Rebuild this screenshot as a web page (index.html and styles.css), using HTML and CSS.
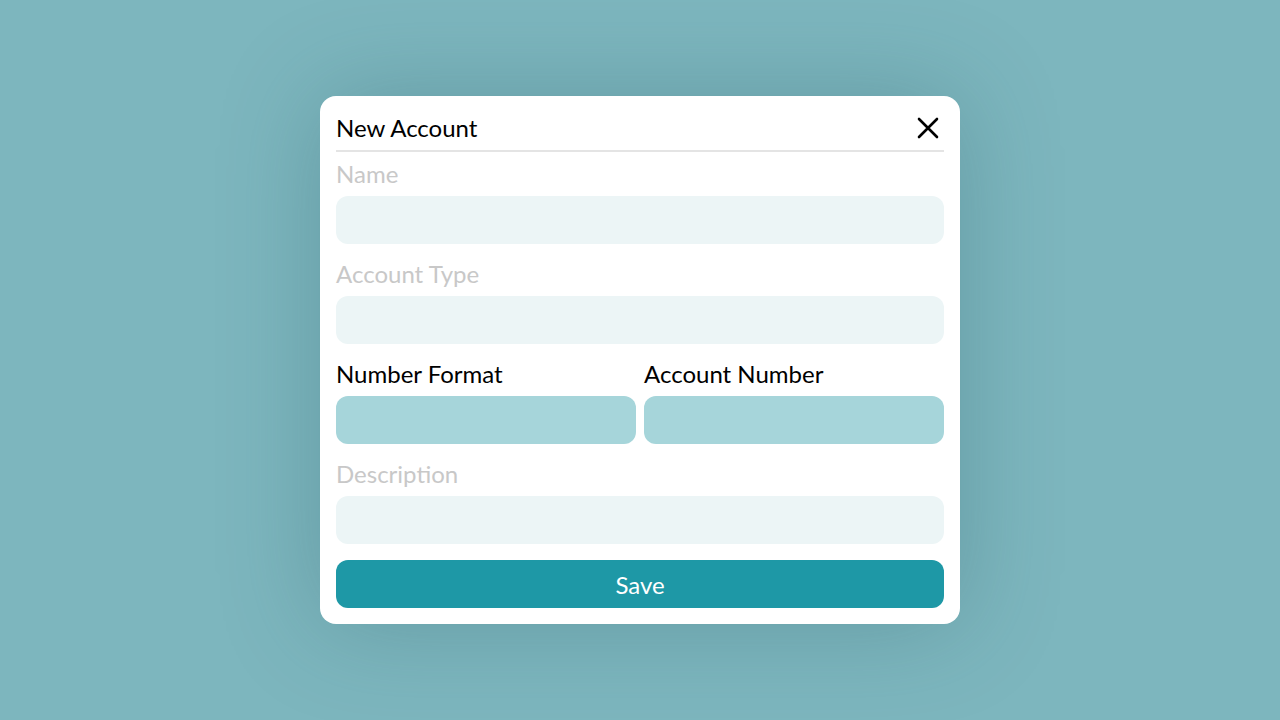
FILE: index.html
```html
<!DOCTYPE html>
<html lang="en">
<head>
    <meta charset="UTF-8">
    <title>New Account</title>
    <link rel="stylesheet" href="styles.css">
</head>
<body>
    <div class="modal">
        <div class="modal-header">
            <h2>New Account</h2>
            <button class="close-btn" aria-label="Close">
                <svg width="22" height="22" viewBox="0 0 22 22">
                    <path d="M2 2 L20 20 M20 2 L2 20" stroke="#000" stroke-width="2.6" stroke-linecap="round" fill="none"/>
                </svg>
            </button>
        </div>

        <div class="field">
            <label class="muted">Name</label>
            <input type="text" class="input">
        </div>

        <div class="field">
            <label class="muted">Account Type</label>
            <input type="text" class="input">
        </div>

        <div class="row">
            <div class="field">
                <label>Number Format</label>
                <input type="text" class="input input-active">
            </div>
            <div class="field">
                <label>Account Number</label>
                <input type="text" class="input input-active">
            </div>
        </div>

        <div class="field">
            <label class="muted">Description</label>
            <input type="text" class="input">
        </div>

        <button class="save-btn">Save</button>
    </div>
</body>
</html>
```

FILE: styles.css
```css
html, body {
    height: 100%;
}
body {
    margin: 0;
    font-family: Lato, 'Noto Sans', sans-serif;
    background: #7db6be;
    display: flex;
    align-items: center;
    justify-content: center;
}
.modal {
    width: 608px;
    padding: 16px;
    background: #fff;
    border-radius: 16px;
    box-shadow: 0 0 100px rgba(40, 90, 100, 0.3);
    display: flex;
    flex-direction: column;
    gap: 16px;
}
.modal-header {
    display: flex;
    align-items: center;
    justify-content: space-between;
    height: 32px;
    padding-bottom: 6px;
    border-bottom: 2px solid #e4e4e4;
    margin-bottom: -8px;
}
.modal-header h2 {
    margin: 0;
    font-size: 24px;
    font-weight: 400;
    color: #000;
    line-height: 32px;
}
.close-btn {
    background: none;
    border: none;
    padding: 0;
    width: 22px;
    height: 22px;
    margin-right: 5px;
    cursor: pointer;
}
.close-btn svg {
    display: block;
}
.field {
    display: flex;
    flex-direction: column;
    gap: 8px;
    flex: 1;
}
label {
    font-size: 24px;
    line-height: 28px;
    color: #000;
}
label.muted {
    color: #c8c8c8;
}
.input {
    height: 48px;
    border: none;
    border-radius: 12px;
    background: #ecf5f6;
    padding: 0 14px;
    font-family: inherit;
    font-size: 18px;
    box-sizing: border-box;
    width: 100%;
    outline: none;
}
.input-active {
    background: #a6d5da;
}
.row {
    display: flex;
    gap: 8px;
}
.save-btn {
    height: 48px;
    border: none;
    border-radius: 12px;
    background: #1e98a6;
    color: #fff;
    font-family: inherit;
    font-size: 24px;
    cursor: pointer;
}
```
